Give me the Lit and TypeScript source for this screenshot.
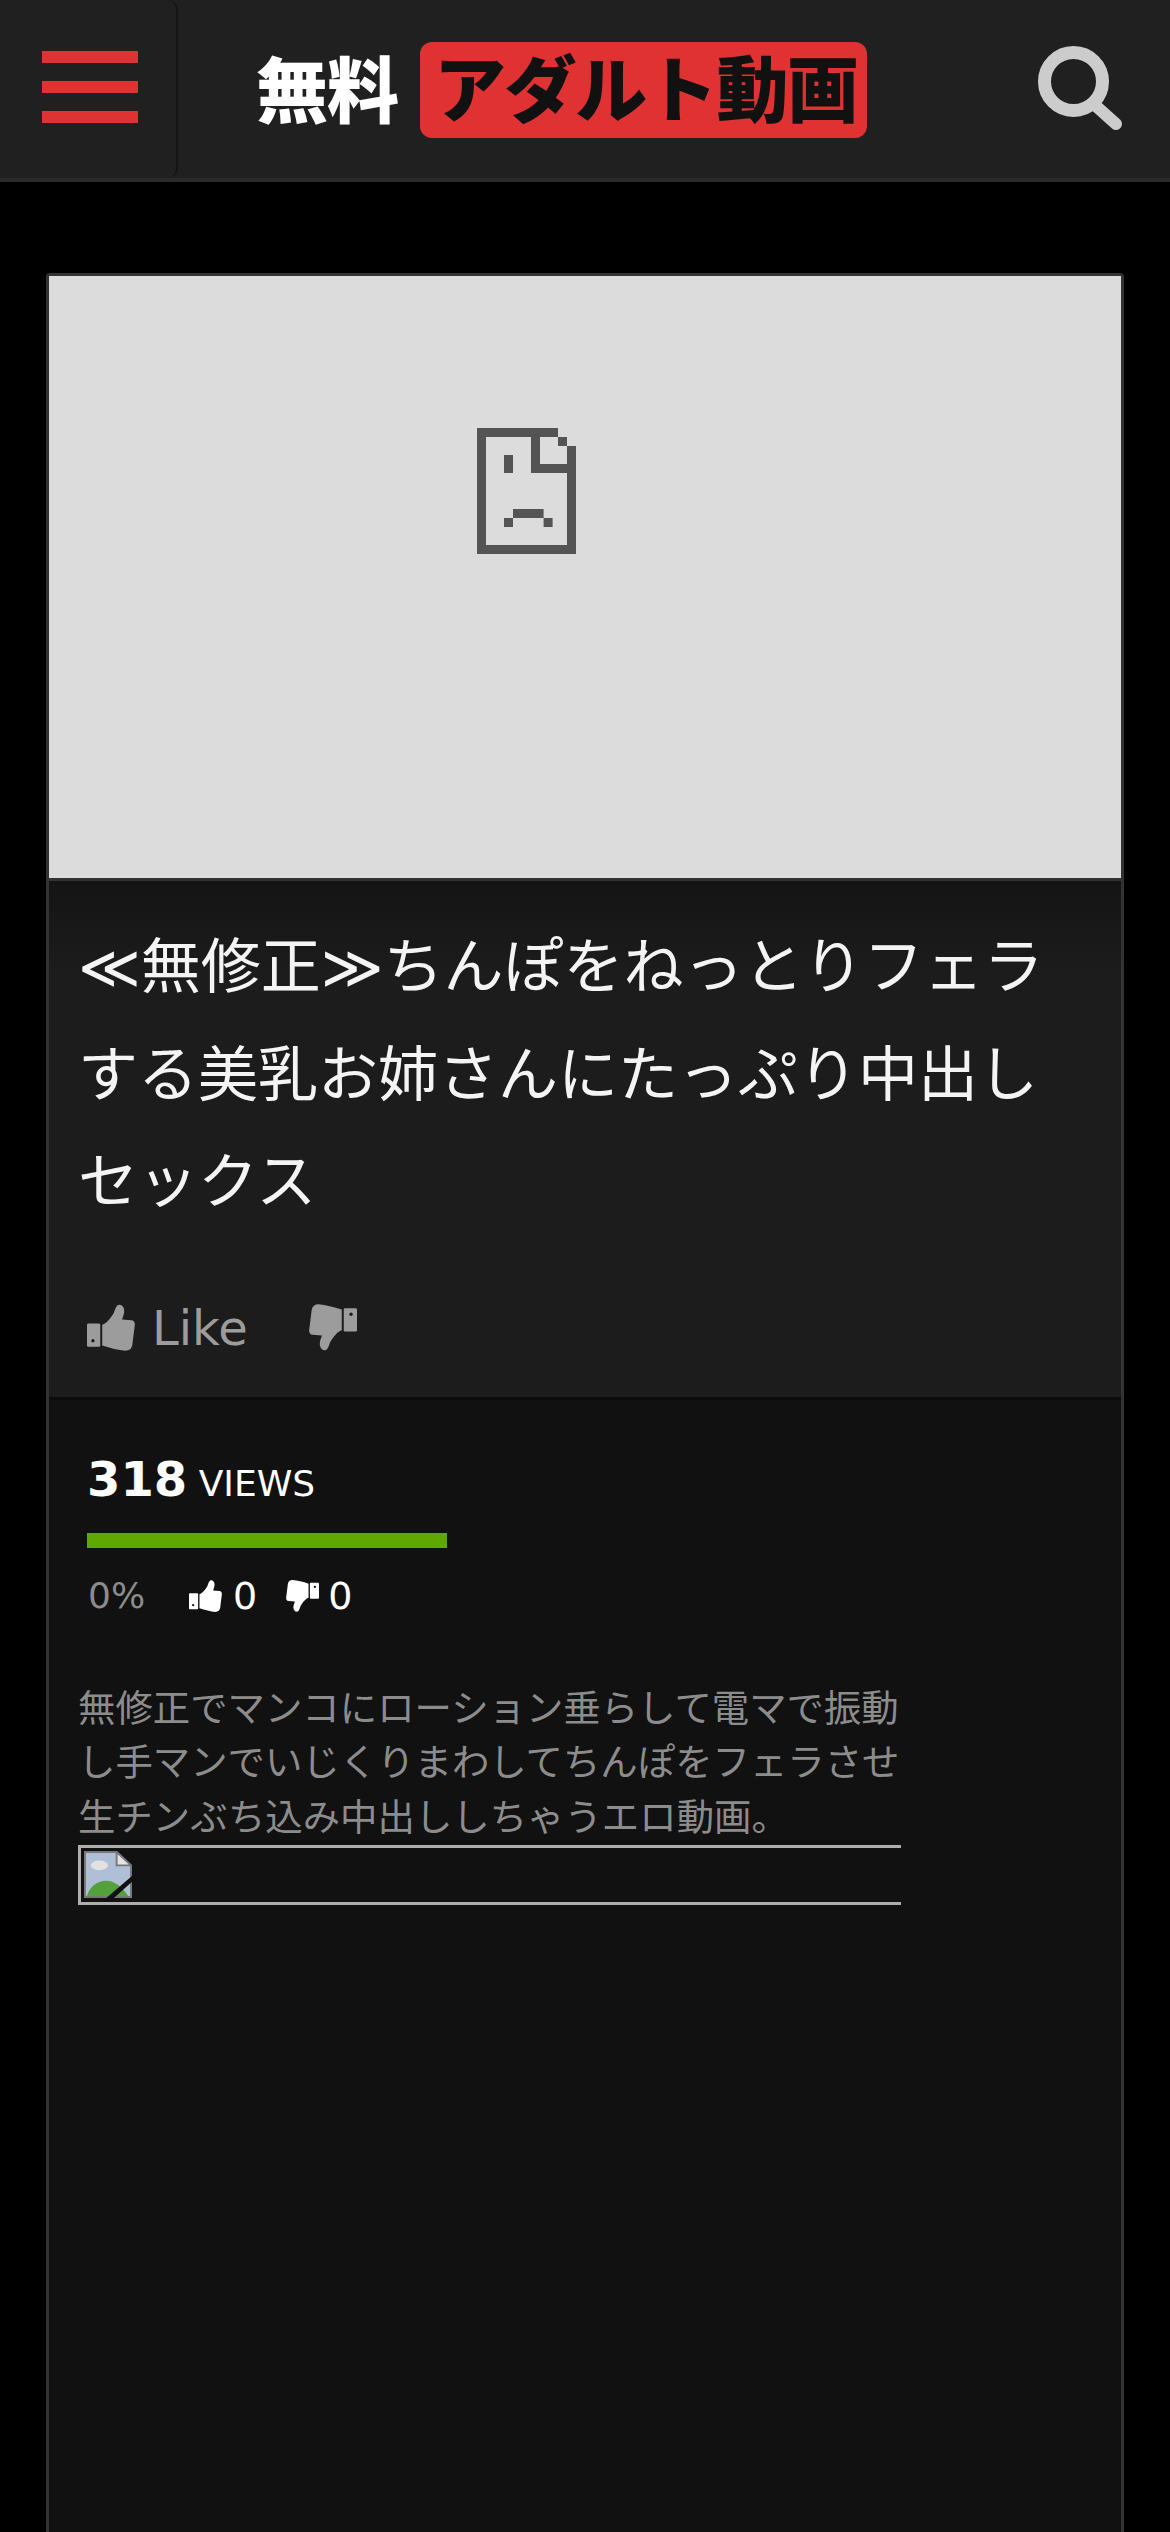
import { LitElement, html, css, svg } from "lit";
import { customElement } from "lit/decorators.js";

const hand = svg`<rect x="0" y="58" width="40" height="70" rx="4"/><path d="M46 62C60 58 72 40 80 28C84 20 85 10 92 3C100-2 110 4 112 16C114 28 108 38 106 46L134 48C143 48 146 58 144 66L137 122C135 134 128 140 116 140C95 138 70 132 46 124Z"/>`;

const up = (cls: string, dot: string) => html`<svg class=${cls} viewBox="0 0 145 140">${hand}<circle cx="18" cy="110" r="5" fill=${dot}/></svg>`;
const down = (cls: string, dot: string) => html`<svg class=${cls} viewBox="0 0 145 140"><g transform="rotate(180 72.5 70)">${hand}<circle cx="18" cy="110" r="5" fill=${dot}/></g></svg>`;

@customElement("app-root")
export class AppRoot extends LitElement {
  static styles = css`
    :host { display: block; width: 1170px; height: 2532px; overflow: hidden; background: #000; font-family: "DejaVu Sans", "Noto Sans CJK JP", sans-serif; }
    .header { height: 178px; background: #202020; border-bottom: 4px solid #2a2a2a; display: flex; align-items: center; }
    .toggle { height: 178px; width: 178px; box-sizing: border-box; border-right: 2px solid #141414; border-radius: 0 10px 10px 0; display: flex; flex-direction: column; justify-content: center; gap: 18px; padding: 0 0 4px 42px; }
    .toggle i { display: block; width: 96px; height: 12px; background: #e03232; }
    .logo { margin: 2px 0 0 78px; display: flex; align-items: center; font-family: "Noto Sans CJK JP", sans-serif; font-weight: 900; font-size: 72px; line-height: 86px; color: #fff; white-space: nowrap; }
    .logo b { font-weight: 900; letter-spacing: -1px; padding-bottom: 8px; }
    .logo span { margin-left: 22px; background: #e03232; color: #111; border-radius: 12px; padding: 0 12px 10px 14px; height: 96px; width: 447px; box-sizing: border-box; letter-spacing: -1.4px; }
    .search { margin-left: auto; margin-right: 46px; width: 88px; height: 88px; display: block; }
    .card { margin: 91px 46px 0; height: 2300px; border: 3px solid #333; border-bottom: 0; border-radius: 4px 4px 0 0; background: #111; }
    .shot { height: 602px; background: #dcdcdc; display: flex; justify-content: flex-start; padding: 152px 0 0 428px; box-sizing: border-box; }
    .shot svg { width: 99px; height: 126px; display: block; }
    .head { background: linear-gradient(#141414, #1c1c1c 90px); border-top: 3px solid #333; height: 522px; box-sizing: border-box; padding: 33px 30px 0 29px; border-bottom: 3px solid #0c0c0c; }
    h1 { margin: 0; font-weight: 400; font-size: 60px; line-height: 107.5px; color: #f4f4f4; width: 980px; }
    .votes { display: flex; align-items: center; margin-top: 63px; color: #9c9c9c; font-size: 48px; padding-left: 9px; }
    .votes svg { width: 48px; height: 47px; fill: #9c9c9c; display: block; }
    .votes .lk { margin-left: 17px; }
    .votes .dn { margin-left: 61px; }
    .stats { padding: 44px 0 0 38px; }
    .count { color: #fff; font-size: 36px; line-height: 70px; }
    .count b { font-size: 48px; font-weight: 700; }
    .bar { width: 360px; height: 15px; background: #5fa800; margin-top: 14px; }
    .rate { display: flex; align-items: center; margin-top: 23px; color: #fff; font-size: 38px; line-height: 50px; padding-left: 1px; }
    .rate .pct { color: #8c8c8c; width: 101px; font-size: 36px; }
    .rate svg { width: 33px; height: 32px; fill: #fff; display: block; margin-right: 11px; }
    .rate svg.tight { margin-right: 9px; }
    .rate .sp { margin-right: 29px; }
    .desc { margin: 61px 0 0 29px; width: 823px; color: #8c8c8c; font-size: 37.4px; line-height: 54.4px; }
    .broken { height: 60px; box-sizing: border-box; border: 3px solid #aeaeae; border-right: 0; padding: 3px 0 0 3px; }
    .broken svg { width: 48px; height: 48px; display: block; }
  `;
  render() {
    return html`
      <div class="header">
        <div class="toggle"><i></i><i></i><i></i></div>
        <div class="logo"><b>無料</b><span>アダルト動画</span></div>
        <svg class="search" viewBox="0 0 88 88" fill="none" stroke="#cccccc"><circle cx="37.5" cy="36.5" r="29" stroke-width="13"/><path d="M60 61L80 79" stroke-width="12" stroke-linecap="round"/></svg>
      </div>
      <div class="card">
        <div class="shot">
          <svg viewBox="0 0 11 14" fill="#545454"><path d="M0 0H9V1H1V13H10V2H11V14H0Z"/><path d="M6 1H7V4H10V5H6Z"/><path d="M9 1H10V2H9Z"/><path d="M3 3H4V5H3Z"/><path d="M4 9H7.4V10H4Z"/><path d="M3 10H4V11H3ZM7.4 10H8.4V11H7.4Z"/></svg>
        </div>
        <div class="head">
          <h1>≪無修正≫ちんぽをねっとりフェラする美乳お姉さんにたっぷり中出しセックス</h1>
          <div class="votes">${up("", "#1c1c1c")}<span class="lk">Like</span><span class="dn">${down("", "#1c1c1c")}</span></div>
        </div>
        <div class="stats">
          <div class="count"><b>318</b> VIEWS</div>
          <div class="bar"></div>
          <div class="rate"><span class="pct">0%</span>${up("", "#111")}<span class="sp">0</span>${down("tight", "#111")}<span>0</span></div>
        </div>
        <div class="desc">無修正でマンコにローション垂らして電マで振動し手マンでいじくりまわしてちんぽをフェラさせ生チンぶち込み中出ししちゃうエロ動画。
          <div class="broken">
            <svg viewBox="0 0 50 50"><path d="M1 1H34L49 15V48H1Z" fill="#b0bfd8" stroke="#777" stroke-width="2"/><path d="M34 1V15H49Z" fill="#e4e4e4" stroke="#777" stroke-width="2"/><ellipse cx="16" cy="15" rx="9" ry="5" fill="#e2e2e2"/><path d="M3 47C8 30 30 22 46 47Z" fill="#54a03a"/><path d="M22 50L50 26V32L30 50Z" fill="#111"/></svg>
          </div>
        </div>
      </div>
    `;
  }
}
